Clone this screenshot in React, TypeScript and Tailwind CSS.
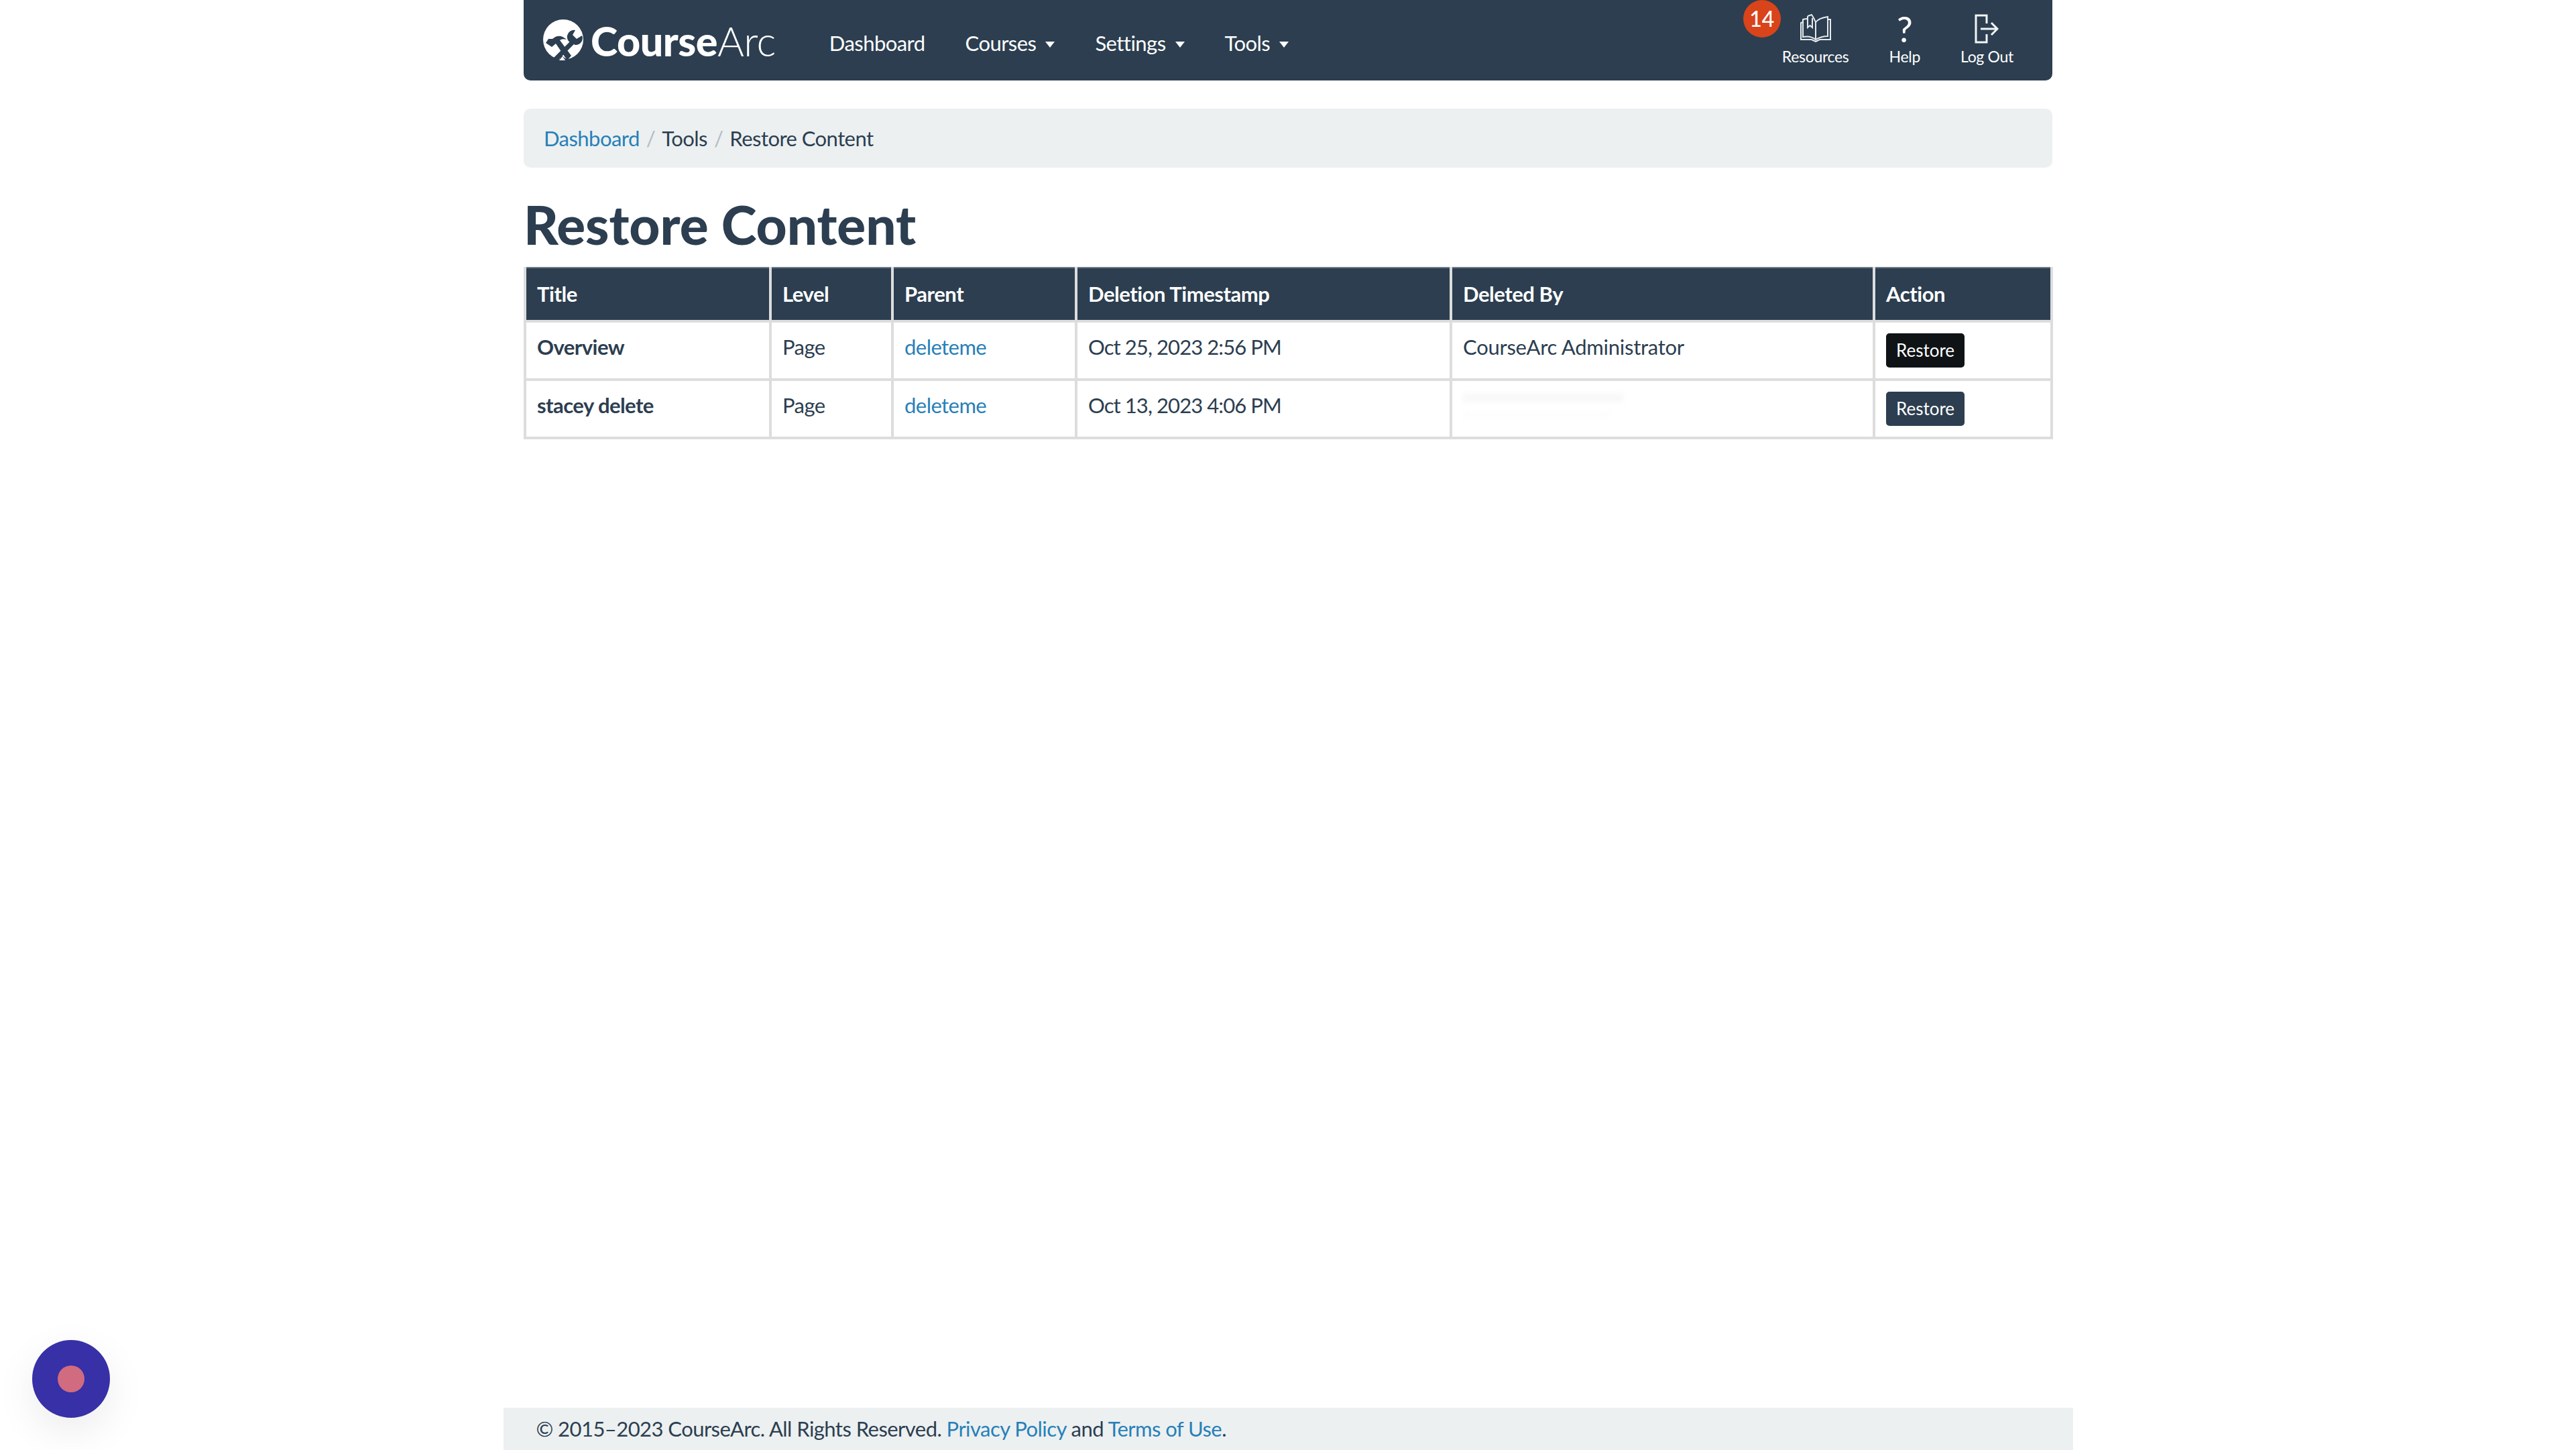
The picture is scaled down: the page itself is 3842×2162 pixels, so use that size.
const linkClass = "text-[#2780b8]"

const navItems = [
	{ label: "Dashboard", caret: false },
	{ label: "Courses", caret: true },
	{ label: "Settings", caret: true },
	{ label: "Tools", caret: true },
]

const columns = [
	{ label: "Title", width: "w-[366px]" },
	{ label: "Level", width: "w-[182px]" },
	{ label: "Parent", width: "w-[274px]" },
	{ label: "Deletion Timestamp", width: "w-[559px]" },
	{ label: "Deleted By", width: "w-[631px]" },
	{ label: "Action", width: "w-[265px]" },
]

function LogoMark() {
	return (
		<svg width="62" height="62" viewBox="0 0 62 62" fill="none">
			<circle cx="30" cy="30" r="30" fill="#fff" />
			<path d="M17 61 L48 30" stroke="#2c3e50" strokeWidth="7" />
			<path d="M44 36 A10 10 0 0 1 48 16 L44 23 L50 29 L58 24 A10 10 0 0 1 48 38 Z" fill="#2c3e50" />
			<path d="M4 35 L8 29 L14 29 Q24 20 35 30 Q28 28 25 31 L42 54 L36 61 L19 36 L13 41 Z" fill="#2c3e50" />
			<path d="M8 64 L54 64 L54 62 L33 58 L28 54 L22 62 Z" fill="#2c3e50" />
			<path d="M29 55 L33 61 L24 61 Z" fill="#fff" />
		</svg>
	)
}

function BookIcon() {
	return (
		<svg width="48" height="42" viewBox="0 0 48 42" fill="none" stroke="#e6eaed" strokeWidth="2">
			<path d="M24 12 L24 38 C18 33 10 33 5 34 L5 8 C8 7 10 7 12 7" />
			<path d="M24 12 C28 7 35 5 42 4 L42 33 C35 33 29 35 24 38" />
			<path d="M12 3 L18 1 C20 4 22 7 24 12 M12 3 L12 20 L15.5 17 L19 20 L19 6" />
			<path d="M5 12 L2 13 L2 38 L18 38 L24 41 L30 38 L46 38 L46 8 L42 8" />
		</svg>
	)
}

function LogoutIcon() {
	return (
		<svg width="36" height="44" viewBox="0 0 36 44" fill="none" stroke="#f2f4f5" strokeWidth="3">
			<path d="M18 14 L18 2 L2 2 L2 42 L18 42 L18 30" />
			<path d="M9 22 L34 22 M25 13 L34 22 L25 31" />
		</svg>
	)
}

function RestoreButton({ dark }: { dark?: boolean }) {
	return (
		<button
			className={`flex h-[51px] w-[117px] items-center justify-center rounded-[5px] text-[26px] tracking-[0px] text-white ${
				dark ? "bg-[#0f1316]" : "bg-[#2c3e50]"
			}`}
		>
			Restore
		</button>
	)
}

const rows = [
	{ title: "Overview", date: "Oct 25, 2023 2:56 PM", by: "CourseArc Administrator", dark: true },
	{ title: "stacey delete", date: "Oct 13, 2023 4:06 PM", by: "", dark: false },
]

export default function App() {
	return (
		<div className="relative flex min-h-[2162px] flex-col items-center overflow-hidden bg-white font-['Lato','Noto_Sans',sans-serif] text-[31px] tracking-[-0.55px] text-[#2c3e50]">
			<div className="flex w-[2280px] flex-grow flex-col">
				{/* Navbar */}
				<nav className="flex h-[120px] items-center rounded-b-[10px] bg-[#2c3e50] pl-[29px] pr-[58px] text-white">
					<div className="flex items-center gap-[9px]">
						<LogoMark />
						<span className="text-[61px] leading-none tracking-[-0.5px]">
							<span className="font-black">Course</span>
							<span className="font-light">Arc</span>
						</span>
					</div>
					<ul className="ml-[80px] mt-[8px] flex items-center gap-[60px]">
						{navItems.map((item) => (
							<li key={item.label} className="flex items-center gap-[14px]">
								{item.label}
								{item.caret && (
									<span className="mt-[4px] h-0 w-0 border-x-[7px] border-t-[9px] border-x-transparent border-t-white" />
								)}
							</li>
						))}
					</ul>
					<div className="relative ml-auto flex items-start gap-[60px] pt-[3px] text-[23px] tracking-[-0.3px]">
						<span className="absolute -top-[18px] left-[-58px] flex h-[56px] w-[56px] items-center justify-center rounded-full bg-[#d9441a] text-[32px] font-medium tracking-[0px]">
							14
						</span>
						<div className="flex flex-col items-center gap-[4px]">
							<BookIcon />
							<span>Resources</span>
						</div>
						<div className="flex flex-col items-center gap-[4px]">
							<span className="flex h-[42px] items-center text-[53px] leading-none">?</span>
							<span>Help</span>
						</div>
						<div className="flex flex-col items-center gap-[2px]">
							<LogoutIcon />
							<span>Log Out</span>
						</div>
					</div>
				</nav>

				{/* Breadcrumb */}
				<div className="mt-[42px] flex h-[88px] items-center gap-[10px] rounded-[10px] bg-[#ecf0f1] px-[30px]">
					<span className={linkClass}>Dashboard</span>
					<span className="text-[#b4bcc2]">/</span>
					<span>Tools</span>
					<span className="text-[#b4bcc2]">/</span>
					<span>Restore Content</span>
				</div>

				<h1 className="mt-[40px] text-[80px] font-black leading-[1.1] tracking-[0px]">Restore Content</h1>

				{/* Table */}
				<table className="mt-[20px] w-[2277px] table-fixed border-collapse">
					<thead>
						<tr className="h-[80px] bg-[#2c3e50] text-white">
							{columns.map((col) => (
								<th
									key={col.label}
									className={`${col.width} border-x-[4px] border-b-[4px] border-t-[2px] border-x-[#dddddd] border-b-[#dddddd] border-t-[#6f7a85] px-[16px] text-left font-bold tracking-[-0.45px]`}
								>
									{col.label}
								</th>
							))}
						</tr>
					</thead>
					<tbody>
						{rows.map((row) => (
							<tr key={row.title} className="h-[87px]">
								<td className="border-[4px] border-[#dddddd] px-[16px] pb-[10px] font-bold">{row.title}</td>
								<td className="border-[4px] border-[#dddddd] px-[16px] pb-[10px]">Page</td>
								<td className={`border-[4px] border-[#dddddd] px-[16px] pb-[10px] ${linkClass}`}>deleteme</td>
								<td className="border-[4px] border-[#dddddd] px-[16px] pb-[10px] tracking-[-0.92px]">{row.date}</td>
								<td className="border-[4px] border-[#dddddd] px-[16px] pb-[10px] tracking-[-0.25px]">
									{row.by || (
										<div className="flex flex-col gap-[14px] blur-[3px]">
											<div className="h-[14px] w-[240px] bg-[#f9f9f9]" />
											<div className="h-[10px] w-[220px] bg-[#fdfdfd]" />
										</div>
									)}
								</td>
								<td className="border-[4px] border-[#dddddd] px-[16px]">
									<RestoreButton dark={row.dark} />
								</td>
							</tr>
						))}
					</tbody>
				</table>
			</div>

			{/* Footer */}
			<footer className="flex h-[63px] w-[2341px] items-center bg-[#ecf0f1] px-[49px]">
				<p>
					© 2015–2023 CourseArc. All Rights Reserved. <span className={linkClass}>Privacy Policy</span> and{" "}
					<span className={linkClass}>Terms of Use</span>.
				</p>
			</footer>

			{/* Chat widget */}
			<div className="fixed bottom-[48px] left-[48px] flex h-[116px] w-[116px] items-center justify-center rounded-full bg-[#3730a6] shadow-[0_20px_60px_rgba(0,0,0,0.08)]">
				<div className="h-[40px] w-[40px] rounded-full bg-[#d16b80]" />
			</div>
		</div>
	)
}
